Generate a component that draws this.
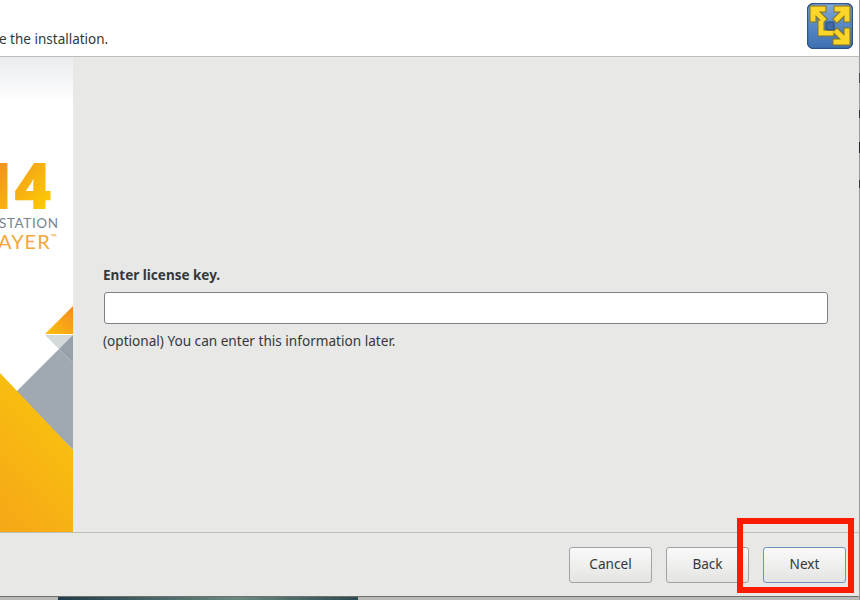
<div class="desktop">
  <div class="window">
    <header class="head">
      <p class="intro">e the installation.</p>
      <svg class="logo" width="46" height="46" viewBox="0 0 46 46">
        <defs>
          <linearGradient id="tile" x1="0" y1="0" x2="0" y2="1">
            <stop offset="0" stop-color="#86acd9"/>
            <stop offset="0.45" stop-color="#5a8ac5"/>
            <stop offset="1" stop-color="#3d70b2"/>
          </linearGradient>
        </defs>
        <rect x="0.5" y="0.5" width="45" height="45" rx="6" fill="url(#tile)" stroke="#2d5488" stroke-width="1.4"/>
        <g fill="none" stroke="#80701f" stroke-width="7" stroke-linecap="square" stroke-linejoin="miter">
          <path d="M6 16V6H16M7 7L16 16M40 16V6H30M39 7L30 16M40 28V39H29M39 38L30 29M14 20V30H24"/>
        </g>
        <g fill="none" stroke="#fbd52a" stroke-width="5" stroke-linecap="square" stroke-linejoin="miter">
          <path d="M6 16V6H16M7 7L16 16M40 16V6H30M39 7L30 16M40 28V39H29M39 38L30 29M14 20V30H24"/>
        </g>
        <rect x="19" y="19" width="8" height="8" rx="1" fill="#3f6ba6" stroke="#26497c"/>
      </svg>
    </header>
    <div class="middle">
      <aside class="side">
        <svg width="73" height="475" viewBox="0 0 73 475">
          <defs>
            <linearGradient id="num" gradientUnits="userSpaceOnUse" x1="0" y1="108" x2="52" y2="153">
              <stop offset="0" stop-color="#f29420"/>
              <stop offset="1" stop-color="#fdd000"/>
            </linearGradient>
            <linearGradient id="tri" x1="0" y1="1" x2="1" y2="0">
              <stop offset="0" stop-color="#fbc20c"/>
              <stop offset="1" stop-color="#f48a22"/>
            </linearGradient>
            <linearGradient id="big" x1="0.7" y1="0" x2="0.2" y2="1">
              <stop offset="0" stop-color="#fac40d"/>
              <stop offset="1" stop-color="#f6a917"/>
            </linearGradient>
          </defs>
          <text class="num" y="152" fill="url(#num)"><tspan x="-22">1</tspan><tspan x="14">4</tspan></text>
          <text class="st" x="-1" y="171">STATION</text>
          <text class="ay" x="-2" y="192">AYER<tspan class="tm" dy="-9">™</tspan></text>
          <polygon points="45,277 73,249 73,277" fill="url(#tri)"/>
          <polygon points="45,278 73,278 73,306" fill="#d4d9dc"/>
          <polygon points="59,292 73,278 73,306" fill="#97a1aa"/>
          <polygon points="16,335 59,292 73,306 73,393" fill="#a0a8b1"/>
          <polygon points="0,316 73,393 73,475 0,475" fill="url(#big)"/>
        </svg>
      </aside>
      <section class="form">
        <label class="title" for="key">Enter license key.</label>
        <input id="key" class="field" type="text" />
        <p class="hint">(optional) You can enter this information later.</p>
      </section>
    </div>
    <footer class="foot">
      <button class="btn">Cancel</button>
      <button class="btn">Back</button>
      <button class="btn primary">Next</button>
    </footer>
  </div>
  <div class="under"><div class="wall"></div></div>
  <div class="mark"></div>
</div>

<style>
  :global(body) { margin: 0; }
  .desktop {
    position: relative;
    width: 860px;
    height: 600px;
    overflow: hidden;
    display: flex;
    flex-direction: column;
    background:
      linear-gradient(#9b9b99 73px, #4a4a4a 73px, #4a4a4a 83px, #9b9b99 83px, #9b9b99 110px, #333 110px, #333 118px, #9b9b99 118px, #9b9b99 142px, #222 142px, #222 153px, #9b9b99 153px, #9b9b99 180px, #333 180px, #333 188px, #9b9b99 188px) right top / 1px 100% no-repeat,
      #b9b9b7;
    font-family: "Noto Sans", "Open Sans", sans-serif;
    color: #33393b;
  }
  .window {
    width: 859px;
    height: 597px;
    flex: none;
    display: flex;
    flex-direction: column;
    background: #e8e8e7;
    border-bottom: 1px solid #6f6f6d;
    box-sizing: border-box;
  }
  .head {
    height: 57px;
    flex: none;
    box-sizing: border-box;
    background: #fff;
    border-bottom: 1px solid #bdbdbb;
    display: flex;
    align-items: flex-start;
    justify-content: space-between;
    padding: 3px 6px 0 0;
  }
  .intro {
    margin: 27px 0 0 -1px;
    font-size: 13.5px;
    line-height: 18px;
  }
  .middle {
    flex: 1;
    display: flex;
    min-height: 0;
  }
  .side {
    width: 73px;
    flex: none;
    background: linear-gradient(#eaecee, #fff 45px);
    overflow: hidden;
  }
  .side svg { display: block; }
  .num { font: 800 64px "Open Sans", sans-serif; }
  .st { font: 400 13.5px "Lato", sans-serif; fill: #76858f; letter-spacing: 0.6px; }
  .ay { font: 400 20px "Lato", sans-serif; fill: #f5a640; letter-spacing: 1px; }
  .tm { font-size: 8px; }
  .form {
    flex: 1;
    display: flex;
    flex-direction: column;
    align-items: flex-start;
    padding: 209px 31px 0 30px;
  }
  .title {
    font-size: 13.5px;
    font-weight: 700;
    line-height: 18px;
    margin-bottom: 8px;
  }
  .field {
    align-self: stretch;
    height: 32px;
    margin-left: 1px;
    box-sizing: border-box;
    border: 1px solid #7f8283;
    border-radius: 3px;
    background: #fff;
    padding: 0 6px;
  }
  .hint {
    margin: 8px 0 0;
    font-size: 13.6px;
    line-height: 18px;
  }
  .foot {
    height: 64px;
    flex: none;
    box-sizing: border-box;
    border-top: 1px solid #bdbdbb;
    display: flex;
    justify-content: flex-end;
    gap: 14px;
    padding: 14px 13px 0 0;
  }
  .btn {
    width: 83px;
    height: 36px;
    box-sizing: border-box;
    border: 1px solid #a3a4a2;
    border-radius: 3px;
    background: linear-gradient(#fafafa, #e4e4e2);
    color: #33393b;
    font: 13.6px/32px "Noto Sans", "Open Sans", sans-serif;
    padding: 0 0 2px;
  }
  .primary {
    border-color: #6f94bd;
  }
  .under {
    flex: 1;
    padding-left: 58px;
  }
  .wall {
    width: 300px;
    height: 100%;
    background: linear-gradient(90deg, #1f3d4a, #6a8a80 60%, #2b4a50);
  }
  .mark {
    position: absolute;
    left: 737px;
    top: 518px;
    width: 117px;
    height: 75px;
    box-sizing: border-box;
    border: 6px solid #fb1b00;
  }
</style>
